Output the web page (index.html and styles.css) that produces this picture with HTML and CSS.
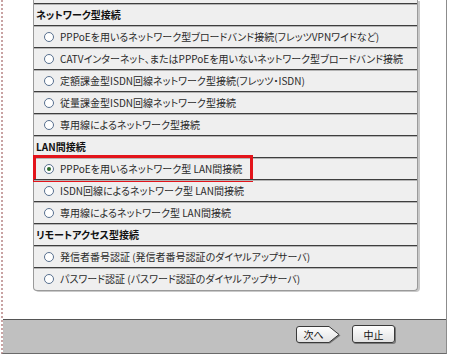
FILE: index.html
```html
<!DOCTYPE html>
<html lang="ja">
<head>
<meta charset="utf-8">
<title>接続種別</title>
<link rel="stylesheet" href="styles.css">
</head>
<body>
<div class="window">
  <div class="content">
    <div class="panel">
      <div class="row head">ネットワーク型接続</div>
      <div class="row opt"><span class="radio"></span><span class="label">PPPoEを用いるネットワーク型ブロードバンド接続(フレッツVPNワイドなど)</span></div>
      <div class="row opt"><span class="radio"></span><span class="label">CATVインターネット、またはPPPoEを用いないネットワーク型ブロードバンド接続</span></div>
      <div class="row opt"><span class="radio"></span><span class="label">定額課金型ISDN回線ネットワーク型接続(フレッツ・ISDN)</span></div>
      <div class="row opt"><span class="radio"></span><span class="label">従量課金型ISDN回線ネットワーク型接続</span></div>
      <div class="row opt"><span class="radio"></span><span class="label">専用線によるネットワーク型接続</span></div>
      <div class="row head">LAN間接続</div>
      <div class="row opt"><span class="radio checked"></span><span class="label">PPPoEを用いるネットワーク型 LAN間接続</span><span class="highlight"></span></div>
      <div class="row opt"><span class="radio"></span><span class="label">ISDN回線によるネットワーク型 LAN間接続</span></div>
      <div class="row opt"><span class="radio"></span><span class="label">専用線によるネットワーク型 LAN間接続</span></div>
      <div class="row head">リモートアクセス型接続</div>
      <div class="row opt"><span class="radio"></span><span class="label">発信者番号認証 (発信者番号認証のダイヤルアップサーバ)</span></div>
      <div class="row opt"><span class="radio"></span><span class="label">パスワード認証 (パスワード認証のダイヤルアップサーバ)</span></div>
    </div>
  </div>
  <div class="footer">
    <div class="btn-next">
      <svg class="next-shape" width="47" height="19" viewBox="0 0 47 19">
        <defs>
          <linearGradient id="bg" x1="0" y1="0" x2="0" y2="1">
            <stop offset="0" stop-color="#ffffff"/>
            <stop offset="1" stop-color="#e2e2e2"/>
          </linearGradient>
        </defs>
        <path d="M5 2.5 H35 L45.5 10.5 L35 18.5 H5 Q2.5 18.5 2.5 16 V5 Q2.5 2.5 5 2.5Z" fill="#777"/>
        <path d="M4 1.5 H34 L44 9.5 L34 17.5 H4 Q1.5 17.5 1.5 15 V4 Q1.5 1.5 4 1.5Z" fill="url(#bg)" stroke="#3a3a3a"/>
      </svg>
      <span class="next-text">次へ</span>
    </div>
    <div class="btn-cancel">中止</div>
  </div>
</div>
</body>
</html>
```
FILE: styles.css
```css
html, body {
  margin: 0;
  padding: 0;
  background: #ffffff;
}
body {
  font-family: "Noto Sans CJK JP", "Noto Sans", sans-serif;
  font-size: 10px;
  color: #222222;
  font-feature-settings: "palt";
}
.window {
  box-sizing: border-box;
  width: 446px;
  height: 354px;
  margin-left: 1px;
  border-left: 2px dotted #c9a3a3;
  border-right: 1px solid #8c8c8c;
  border-bottom: 1px solid #6a6a6a;
  display: flex;
  flex-direction: column;
}
.content {
  height: 319px;
  padding-left: 30px;
  background: #ffffff;
}
.panel {
  width: 383px;
  background: #efefef;
  border: 1px solid #9a9a9a;
  border-top: none;
  border-radius: 0 0 4px 4px;
  box-shadow: 2px 1px 0 #c9c9c9;
  padding-top: 3px;
  padding-bottom: 1px;
}
.row {
  position: relative;
  height: 21px;
  border-top: 1px solid #3e3e3e;
  box-shadow: inset 0 1px 0 #b4b4b4;
  display: flex;
  align-items: center;
  white-space: nowrap;
  line-height: 1;
}
.head {
  padding-left: 2px;
  font-weight: bold;
  color: #111111;
}
.opt {
  padding-left: 10px;
}
.radio {
  box-sizing: border-box;
  width: 10px;
  height: 10px;
  border: 1px solid #58708f;
  border-radius: 50%;
  background: #ffffff;
  margin-right: 6px;
  flex: none;
  display: flex;
  align-items: center;
  justify-content: center;
}
.radio.checked::after {
  content: "";
  width: 4px;
  height: 4px;
  border-radius: 50%;
  background: #2d6a2d;
}
.label {
  color: #2a2a2a;
}
.highlight {
  position: absolute;
  box-sizing: border-box;
  left: -1px;
  top: -3px;
  width: 220px;
  height: 27px;
  border: 3px solid #e3141b;
}
.footer {
  flex: 1;
  background: #c0c0c0;
  border-top: 1px solid #555555;
  display: flex;
  align-items: center;
  justify-content: flex-end;
  padding-right: 51px;
  padding-bottom: 5px;
  gap: 10px;
}
.btn-next {
  position: relative;
  width: 47px;
  height: 19px;
}
.next-shape {
  display: block;
}
.next-text {
  position: absolute;
  left: 2px;
  top: 2px;
  width: 33px;
  height: 15px;
  display: flex;
  align-items: center;
  justify-content: center;
  font-size: 10px;
  color: #111111;
}
.btn-cancel {
  box-sizing: border-box;
  width: 43px;
  height: 18px;
  border: 1px solid #3a3a3a;
  border-radius: 3px;
  background: linear-gradient(#ffffff, #e2e2e2);
  box-shadow: 1px 1px 0 #777777;
  display: flex;
  align-items: center;
  justify-content: center;
  font-size: 10px;
  color: #111111;
}
```
